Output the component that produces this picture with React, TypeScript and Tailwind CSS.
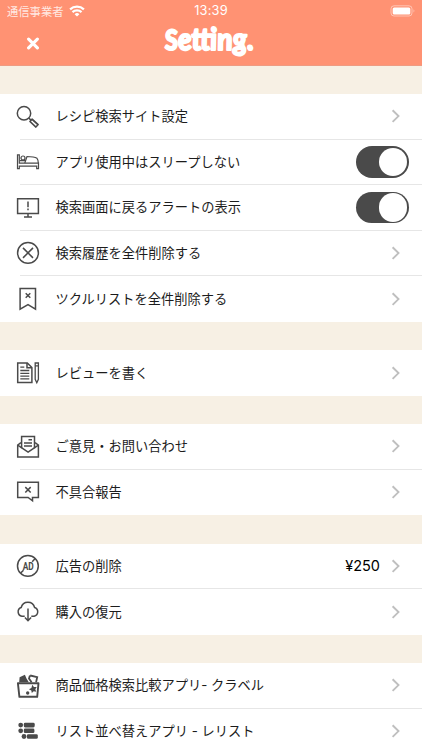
import type { ReactNode } from "react";

// Shared wrapper for the outlined row icons
function Icon({ children }: { children: ReactNode }) {
  return (
    <svg
      viewBox="0 0 24 24"
      className="h-6 w-6 shrink-0 overflow-visible"
      fill="none"
      stroke="#4a4a4a"
      strokeWidth="1.5"
    >
      {children}
    </svg>
  );
}

const SearchIcon = () => (
  <Icon>
    <circle cx="8" cy="8.2" r="6.7" />
    <path d="M12.8 13l2.6 2.6" />
    <path d="M13.9 16.4l2.2-2.3 6.1 5.5-2.3 2.5z" strokeLinejoin="round" />
    <path d="M16 14.4l5.9 5.4" strokeWidth="1.2" />
  </Icon>
);

const BedIcon = () => (
  <Icon>
    <path d="M1.5 4.9h1.8v8.2h19.2v5.5h-1.8v-2.4H3.3v2.4H1.5z" strokeWidth="1.2" />
    <circle cx="7" cy="8" r="2" strokeWidth="1.2" />
    <path d="M4 10.6h5.6L11 6.5c4 0 8 .5 10 1.8 1 1.2 1.3 3 1.3 4.8M9.6 10.6l-.8 2.5" strokeWidth="1.2" />
  </Icon>
);

const MonitorIcon = () => (
  <Icon>
    <path d="M1.6 2.7h20.8v14.8H1.6zM12 17.5v3.4M8 21h8" />
    <path d="M12 5.6v5.6M12 12.6v1.7" />
  </Icon>
);

const CircleXIcon = () => (
  <Icon>
    <circle cx="12" cy="11.9" r="10.4" />
    <path d="M7 6.9l10 10M17 6.9l-10 10" />
  </Icon>
);

const BookmarkIcon = () => (
  <Icon>
    <path d="M4.1 1.5h15.4v20.6L12 17.7l-7.9 4.4z" />
    <path d="M9.7 6.2l4.6 4.6M14.3 6.2l-4.6 4.6" />
  </Icon>
);

const ReviewIcon = () => (
  <Icon>
    <path d="M1.7 1.9h9.6l4.6 4.6v15H1.7z" />
    <path d="M11 2v4.8h5" />
    <path d="M4.3 6.2h4M4.3 9.5h9M4.3 12.3h9M4.3 15.1h9M4.3 17.9h9" strokeWidth="1.3" />
    <path d="M19.2 2h3.2v16.3l-1.6 3.4-1.6-3.4zM19.2 4.8h3.2" strokeWidth="1.3" />
  </Icon>
);

const MailIcon = () => (
  <Icon>
    <path d="M5.6 8H4.4L1.7 10.2V22h20.7V10.2L19.6 8h-1.1" />
    <path d="M5.6 13.3V1.6h12.9v11.7" />
    <path d="M1.7 10.2l10.4 7 10.3-7" />
    <path d="M12.5 4.8H16M8 7.9h8M8 11h8" />
  </Icon>
);

const ReportIcon = () => (
  <Icon>
    <path d="M1.7 2.3h20.7v15.2h-5.9v3.3l-4.4-3.3H1.7z" />
    <path d="M9.3 7.1l5.4 5.4M14.7 7.1l-5.4 5.4" />
  </Icon>
);

const AdIcon = () => (
  <Icon>
    <circle cx="11.9" cy="11.9" r="10.4" />
    <path d="M4.7 19.1l2.8-2.9M16.2 7.8l3-3.3" />
    <text
      x="12.2"
      y="15.9"
      textAnchor="middle"
      textLength="11"
      lengthAdjust="spacingAndGlyphs"
      fill="#4a4a4a"
      stroke="none"
      className="font-['Roboto'] text-[11.2px] font-bold"
    >
      AD
    </text>
  </Icon>
);

const CloudIcon = () => (
  <Icon>
    <path d="M8.7 16.2H5.9a4.5 4.5 0 0 1-.7-8.7 6.9 6.9 0 0 1 13.4 0 4.5 4.5 0 0 1-.5 8.7h-2.8" />
    <path d="M12 8.6v11.9M8.9 17.5l3.1 3.2 3.1-3.2" />
  </Icon>
);

const BasketIcon = () => (
  <Icon>
    <path d="M1.9 9.2h20.6l-1.3 13.6H3.4z" strokeWidth="1.9" strokeLinejoin="round" />
    <path d="M3.6 3.2L8.9.8l1.6 3.6 2.3 3.8H3.2z" fill="#4a4a4a" stroke="none" />
    <path d="M14.2 1.5l7 1.6-1.1 5M13.9 1.5l-.9 3 2.6 3.8" strokeWidth="1.8" />
    <path
      d="M16.3 10.7l1.6 2.3 2.8-.1-1.4 2.4 1 2.4-2.6-.5-1.9 1.9-.5-2.7-2.4-1.1 2.5-1.2z"
      fill="#4a4a4a"
      stroke="none"
    />
    <circle cx="11.7" cy="19" r="1.7" fill="#4a4a4a" stroke="none" />
  </Icon>
);

const ListIcon = () => (
  <Icon>
    <g fill="#4a4a4a" stroke="none">
      <circle cx="4.7" cy="6.1" r="2.4" />
      <circle cx="4.7" cy="11.8" r="2.4" />
      <circle cx="8" cy="17.5" r="2.4" />
      <rect x="7.8" y="3.8" width="10.9" height="4.6" rx="1.4" />
      <rect x="7.8" y="9.5" width="10.6" height="4.6" rx="1.4" />
      <rect x="10.9" y="15.2" width="10.9" height="4.6" rx="1.4" />
    </g>
  </Icon>
);

function Chevron() {
  return (
    <svg viewBox="0 0 10 14" className="h-3.5 w-2.5" fill="none" stroke="#bfbfbf" strokeWidth="1.9">
      <path d="M1.6 1.3l5.9 5.8-5.9 5.8" />
    </svg>
  );
}

function Toggle() {
  return (
    <div className="flex h-[31.5px] w-[52.5px] items-center justify-end rounded-full bg-[#4a4a4a] pr-[1.5px]">
      <div className="h-[28.5px] w-[28.5px] rounded-full bg-white" />
    </div>
  );
}

interface RowItem {
  label: string;
  icon: ReactNode;
  toggle?: boolean;
  price?: string;
}

const sections: RowItem[][] = [
  [
    { label: "レシピ検索サイト設定", icon: <SearchIcon /> },
    { label: "アプリ使用中はスリープしない", icon: <BedIcon />, toggle: true },
    { label: "検索画面に戻るアラートの表示", icon: <MonitorIcon />, toggle: true },
    { label: "検索履歴を全件削除する", icon: <CircleXIcon /> },
    { label: "ツクルリストを全件削除する", icon: <BookmarkIcon /> },
  ],
  [{ label: "レビューを書く", icon: <ReviewIcon /> }],
  [
    { label: "ご意見・お問い合わせ", icon: <MailIcon /> },
    { label: "不具合報告", icon: <ReportIcon /> },
  ],
  [
    { label: "広告の削除", icon: <AdIcon />, price: "¥250" },
    { label: "購入の復元", icon: <CloudIcon /> },
  ],
  [
    { label: "商品価格検索比較アプリ- クラベル", icon: <BasketIcon /> },
    { label: "リスト並べ替えアプリ - レリスト", icon: <ListIcon /> },
  ],
];

// Hyphens are set in the latin face, which is wider than the CJK one
function Label({ text }: { text: string }) {
  return (
    <span className="whitespace-nowrap text-[13.25px] leading-5">
      {text.split(/( ?- )/).map((part, i) =>
        part.includes("-") ? (
          <span key={i} className="font-['Inter'] leading-none">
            {part}
          </span>
        ) : (
          part
        )
      )}
    </span>
  );
}

function Row({ item, last }: { item: RowItem; last: boolean }) {
  return (
    <div className="flex h-[45.5px] shrink-0 items-center pl-4">
      {item.icon}
      <div
        className={
          last
            ? "ml-[-20px] flex h-full flex-1 items-center pl-[35.5px] pr-[13.5px]"
            : "ml-[-20px] flex h-full flex-1 items-center border-b border-[#e6e6e6] pl-[35.5px] pr-[13.5px]"
        }
      >
        <Label text={item.label} />
        <div className="ml-auto flex items-center">
          {item.price && (
            <span className="mr-[10.5px] font-['Inter'] text-[14.5px] leading-5 text-black">{item.price}</span>
          )}
          {item.toggle ? (
            <Toggle />
          ) : (
            <span className="pr-2">
              <Chevron />
            </span>
          )}
        </div>
      </div>
    </div>
  );
}

function Header() {
  return (
    <header className="h-[66px] shrink-0 border-b border-[#ee9b82] bg-[#ff9273] text-white">
      <div className="grid h-[22px] grid-cols-3 items-center px-[7px]">
        <div className="flex items-center gap-[5px]">
          <span className="text-[11.3px] leading-5 opacity-80">通信事業者</span>
          <svg viewBox="0 0 16 12" className="h-3 w-4" fill="none" stroke="white" strokeWidth="2.2">
            <path d="M1.1 4.4a10 10 0 0 1 13.8 0M3.5 7.1a6.6 6.6 0 0 1 9 0" />
            <path d="M8 11.6L5.6 9.2a3.4 3.4 0 0 1 4.8 0z" fill="white" stroke="none" />
          </svg>
        </div>
        <span className="text-center font-['Inter'] text-[12.8px] leading-5 tracking-[0.2px]">13:39</span>
        <svg viewBox="0 0 25 12" className="ml-auto h-3 w-[25px]">
          <rect x="1" y="0.8" width="21" height="10.2" rx="3" fill="none" stroke="white" strokeOpacity="0.45" />
          <rect x="2.7" y="2.4" width="17.6" height="7" rx="1.5" fill="white" />
          <path d="M23.5 4.3v3.2c1.2-.5 1.2-2.7 0-3.2z" fill="white" fillOpacity="0.45" />
        </svg>
      </div>
      <div className="grid h-[43px] grid-cols-3 items-center px-[7px]">
        <svg viewBox="0 0 14 14" className="ml-[19px] h-3.5 w-3.5" stroke="white" strokeWidth="3.1" strokeLinecap="round">
          <path d="M2.6 2.1l8.8 8.8M11.4 2.1l-8.8 8.8" />
        </svg>
        <svg viewBox="0 0 100 40" className="h-10 w-[100px] justify-self-center overflow-visible">
          <text
            transform="translate(4.5 25.8) skewX(5)"
            textLength="89"
            lengthAdjust="spacingAndGlyphs"
            fill="white"
            stroke="white"
            strokeWidth="1.8"
            strokeLinejoin="round"
            className="font-['Lato'] text-[31px] leading-none font-black italic"
          >
            <tspan className="text-[28px]">S</tspan>etting.
          </text>
        </svg>
        <span />
      </div>
    </header>
  );
}

export default function App() {
  return (
    <div className="flex h-[750px] w-full flex-col overflow-hidden bg-[#f7f0e4] font-['Noto_Sans_CJK_JP',sans-serif] text-[#1c1c1c]">
      <Header />
      <main className="flex flex-col gap-[28.5px] pt-7">
        {sections.map((rows, i) => (
          <section key={i} className="flex flex-col bg-white">
            {rows.map((item, j) => (
              <Row key={item.label} item={item} last={j === rows.length - 1} />
            ))}
          </section>
        ))}
      </main>
    </div>
  );
}
